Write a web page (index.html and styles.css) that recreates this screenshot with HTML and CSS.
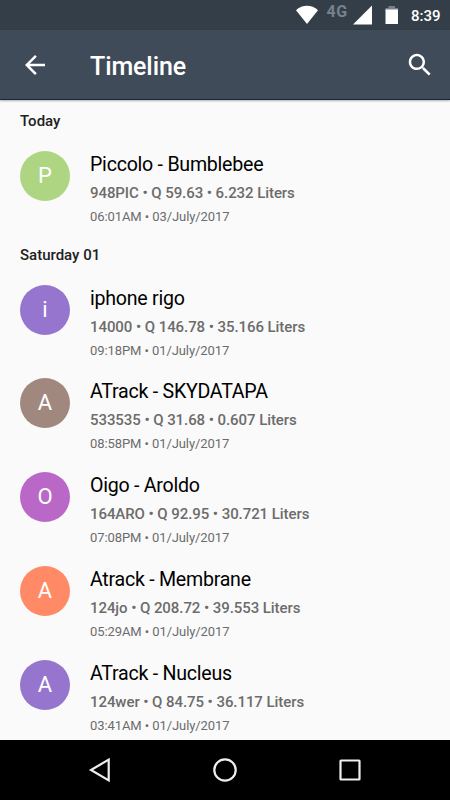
FILE: index.html
```html
<!DOCTYPE html>
<html lang="en">
<head>
    <meta charset="UTF-8">
    <meta name="viewport" content="width=device-width, initial-scale=1.0">
    <title>Timeline</title>
    <link rel="stylesheet" href="styles.css">
</head>
<body>
    <div class="screen">
        <div class="status-bar">
            <svg class="wifi-icon" width="24" height="20" viewBox="0 0 24 20">
                <path d="M1 5.200C4.200 2.300 8 .800 12 .800S19.800 2.300 23 5.200L12 19z" fill="#fff"/>
            </svg>
            <span class="network-type">4G</span>
            <svg class="signal-icon" width="20" height="20" viewBox="0 0 20 20">
                <path d="M0 19.500L19 0.500V19.500z" fill="#fff"/>
            </svg>
            <svg class="battery-icon" width="14" height="20" viewBox="0 0 14 20">
                <path d="M3.500 1h6.500v2H13v3H.500V3h3z" fill="#76818c"/>
                <path d="M.500 4.500H13V19H.500z" fill="#fff"/>
            </svg>
            <span class="clock">8:39</span>
        </div>

        <header class="toolbar">
            <svg class="back-icon" width="30" height="30" viewBox="0 0 24 24">
                <path d="M20 11H7.830l5.590-5.590L12 4l-8 8 8 8 1.410-1.410L7.830 13H20v-2z" fill="#fff"/>
            </svg>
            <h1 class="toolbar-title">Timeline</h1>
            <svg class="search-icon" width="30" height="30" viewBox="0 0 24 24">
                <path d="M15.500 14h-.790l-.280-.270C15.410 12.590 16 11.110 16 9.500 16 5.910 13.090 3 9.500 3S3 5.910 3 9.500 5.910 16 9.500 16c1.610 0 3.090-.590 4.230-1.570l.270.280v.790l5 4.990L20.490 19l-4.990-5zm-6 0C7.010 14 5 11.990 5 9.500S7.010 5 9.500 5 14 7.010 14 9.500 11.990 14 9.500 14z" fill="#fff"/>
            </svg>
        </header>

        <main class="timeline">
            <h2 class="day-header">Today</h2>
            <div class="entry">
                <div class="avatar green">P</div>
                <div class="entry-text">
                    <div class="entry-name">Piccolo - Bumblebee</div>
                    <div class="entry-details">948PIC • Q 59.63 • 6.232 Liters</div>
                    <div class="entry-time">06:01AM • 03/July/2017</div>
                </div>
            </div>

            <h2 class="day-header">Saturday 01</h2>
            <div class="entry">
                <div class="avatar violet">i</div>
                <div class="entry-text">
                    <div class="entry-name">iphone rigo</div>
                    <div class="entry-details">14000 • Q 146.78 • 35.166 Liters</div>
                    <div class="entry-time">09:18PM • 01/July/2017</div>
                </div>
            </div>
            <div class="entry">
                <div class="avatar brown">A</div>
                <div class="entry-text">
                    <div class="entry-name">ATrack - SKYDATAPA</div>
                    <div class="entry-details">533535 • Q 31.68 • 0.607 Liters</div>
                    <div class="entry-time">08:58PM • 01/July/2017</div>
                </div>
            </div>
            <div class="entry">
                <div class="avatar purple">O</div>
                <div class="entry-text">
                    <div class="entry-name">Oigo - Aroldo</div>
                    <div class="entry-details">164ARO • Q 92.95 • 30.721 Liters</div>
                    <div class="entry-time">07:08PM • 01/July/2017</div>
                </div>
            </div>
            <div class="entry">
                <div class="avatar orange">A</div>
                <div class="entry-text">
                    <div class="entry-name">Atrack - Membrane</div>
                    <div class="entry-details">124jo • Q 208.72 • 39.553 Liters</div>
                    <div class="entry-time">05:29AM • 01/July/2017</div>
                </div>
            </div>
            <div class="entry">
                <div class="avatar violet">A</div>
                <div class="entry-text">
                    <div class="entry-name">ATrack - Nucleus</div>
                    <div class="entry-details">124wer • Q 84.75 • 36.117 Liters</div>
                    <div class="entry-time">03:41AM • 01/July/2017</div>
                </div>
            </div>
        </main>

        <nav class="nav-bar">
            <svg width="26" height="26" viewBox="0 0 26 26">
                <path d="M21.700 2.600V23.400L4 13z"/>
            </svg>
            <svg width="26" height="26" viewBox="0 0 26 26">
                <circle cx="13" cy="13" r="10.700"/>
            </svg>
            <svg width="26" height="26" viewBox="0 0 26 26">
                <rect x="3.500" y="3.500" width="19" height="19" rx="0.500"/>
            </svg>
        </nav>
    </div>
</body>
</html>
```
FILE: styles.css
```css
* {
    margin: 0;
    padding: 0;
    box-sizing: border-box;
}

body {
    font-family: Roboto, "Noto Sans", sans-serif;
    background: #fafafa;
}

svg {
    display: block;
    flex-shrink: 0;
}

.screen {
    width: 450px;
    height: 800px;
    display: flex;
    flex-direction: column;
    overflow: hidden;
}

.status-bar {
    height: 30px;
    flex-shrink: 0;
    background: #343e49;
    color: #fff;
    display: flex;
    align-items: flex-start;
    justify-content: flex-end;
    padding: 5px 9.5px 0 0;
}

.wifi-icon {
    margin-right: 7px;
}

.network-type {
    width: 26.5px;
    margin-top: -2px;
    font-size: 16px;
    line-height: 18px;
    font-weight: 700;
    letter-spacing: 0.7px;
    color: #76818c;
}

.battery-icon {
    margin: 0 12px 0 12px;
}

.clock {
    padding-top: 1px;
    font-size: 15px;
    line-height: 20px;
    font-weight: 500;
}

.toolbar {
    height: 70px;
    flex-shrink: 0;
    background: #404b59;
    border-bottom: 1px solid #14283d;
    box-shadow: 0 1px 2px rgba(0, 0, 0, 0.3);
    color: #fff;
    display: flex;
    align-items: center;
    padding: 1px 15px 0 20px;
    z-index: 1;
}

.toolbar-title {
    flex: 1;
    margin-left: 40px;
    padding-top: 4px;
    font-size: 25px;
    line-height: 30px;
    font-weight: 500;
    letter-spacing: -0.1px;
}

.timeline {
    flex: 1;
    min-height: 0;
    overflow: hidden;
    padding-top: 1px;
}

.day-header {
    height: 40.25px;
    padding-left: 20px;
    font-size: 15px;
    line-height: 40px;
    font-weight: 500;
    color: #212121;
}

.entry {
    height: 93.75px;
    display: flex;
    align-items: flex-start;
    padding: 9.25px 20px 0;
}

.avatar {
    width: 50px;
    height: 50px;
    border-radius: 50%;
    color: #fff;
    font-size: 22px;
    line-height: 50px;
    text-align: center;
}

.green {
    background: #aed581;
}

.violet {
    background: #9575cd;
}

.brown {
    background: #a1887f;
}

.purple {
    background: #ba68c8;
}

.orange {
    background: #ff8a65;
}

.entry-text {
    margin-left: 20px;
}

.entry-name {
    margin-top: 2px;
    font-size: 19.6px;
    line-height: 24px;
    letter-spacing: -0.25px;
    color: #000;
}

.entry-details {
    margin-top: 6px;
    font-size: 15px;
    line-height: 20px;
    font-weight: 500;
    letter-spacing: -0.07px;
    color: #6c6c6c;
}

.entry-time {
    margin-top: 5px;
    font-size: 13px;
    line-height: 18px;
    letter-spacing: -0.08px;
    color: #6c6c6c;
}

.nav-bar {
    height: 60px;
    flex-shrink: 0;
    background: #000;
    display: flex;
    align-items: center;
    justify-content: center;
    gap: 99px;
}

.nav-bar svg {
    fill: none;
    stroke: #eee;
    stroke-width: 2.2;
}
```
